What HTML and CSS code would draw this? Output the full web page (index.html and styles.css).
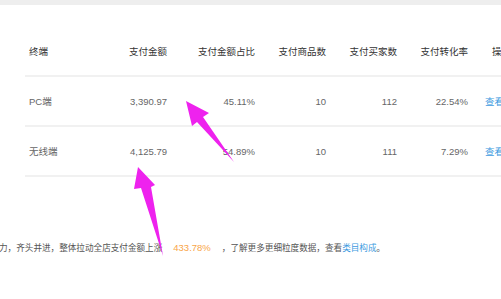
FILE: index.html
```html
<!DOCTYPE html>
<html lang="zh-CN">
<head>
<meta charset="utf-8">
<link rel="stylesheet" href="styles.css">
</head>
<body>
<div class="topbar"></div>
<main class="page">
  <table class="data">
    <colgroup>
      <col class="c1"><col class="c2"><col class="c3"><col class="c4"><col class="c5"><col class="c6"><col class="c7">
    </colgroup>
    <thead>
      <tr>
        <th class="left">终端</th>
        <th>支付金额</th>
        <th>支付金额占比</th>
        <th>支付商品数</th>
        <th>支付买家数</th>
        <th>支付转化率</th>
        <th class="op">操作</th>
      </tr>
    </thead>
    <tbody>
      <tr>
        <td class="left">PC端</td>
        <td>3,390.97</td>
        <td>45.11%</td>
        <td>10</td>
        <td>112</td>
        <td>22.54%</td>
        <td class="op"><a class="link">查看</a></td>
      </tr>
      <tr>
        <td class="left">无线端</td>
        <td>4,125.79</td>
        <td>54.89%</td>
        <td>10</td>
        <td>111</td>
        <td>7.29%</td>
        <td class="op"><a class="link">查看</a></td>
      </tr>
    </tbody>
  </table>
  <p class="summary">力，齐头并进，整体拉动全店支付金额上涨<span class="hl">433.78%</span>，了解更多更细粒度数据，查看<a class="link">类目构成</a>。</p>
</main>
<svg class="marks" width="501" height="299" viewBox="0 0 501 299">
  <polygon points="186,101 209,113 203,117 234,162 197,122 192,126" />
  <polygon points="138,167 155,185 151,187 163,256 141,188 134,189" />
</svg>
</body>
</html>
```

FILE: styles.css
```css
html, body {
  margin: 0;
  padding: 0;
  background: #fff;
  width: 501px;
  height: 299px;
  overflow: hidden;
  font-family: "Liberation Sans", "Noto Sans CJK SC", sans-serif;
}
.topbar {
  height: 5px;
  background: #eeeeee;
}
.page {
  padding-top: 22px;
  position: relative;
}
.data {
  margin-left: 25px;
  border-collapse: collapse;
  table-layout: fixed;
  width: 503px;
  font-size: 9.5px;
}
.c1 { width: 75px; }
.c2 { width: 67px; }
.c3 { width: 88px; }
.c4, .c5, .c6 { width: 71px; }
.c7 { width: 60px; }
.data th, .data td {
  height: 48px;
  padding: 0;
  text-align: right;
  border-bottom: 2px solid #f1f1f1;
  white-space: nowrap;
  vertical-align: middle;
}
.data th {
  color: #333;
  font-weight: normal;
}
.data td {
  color: #666;
}
.data .left {
  text-align: left;
  padding-left: 4px;
}
.data th.op {
  text-align: left;
  padding-left: 24px;
}
.data td.op {
  text-align: left;
  padding-left: 17px;
}
.link {
  color: #3d9ae0;
}
.summary {
  margin: 64px 0 0 -1px;
  font-size: 8.6px;
  line-height: 14px;
  color: #555;
  white-space: nowrap;
}
.hl {
  color: #f9a548;
  font-size: 9.5px;
  padding: 0 11px;
}
.marks {
  position: absolute;
  left: 0;
  top: 0;
}
.marks polygon {
  fill: #ee22ee;
}
```
